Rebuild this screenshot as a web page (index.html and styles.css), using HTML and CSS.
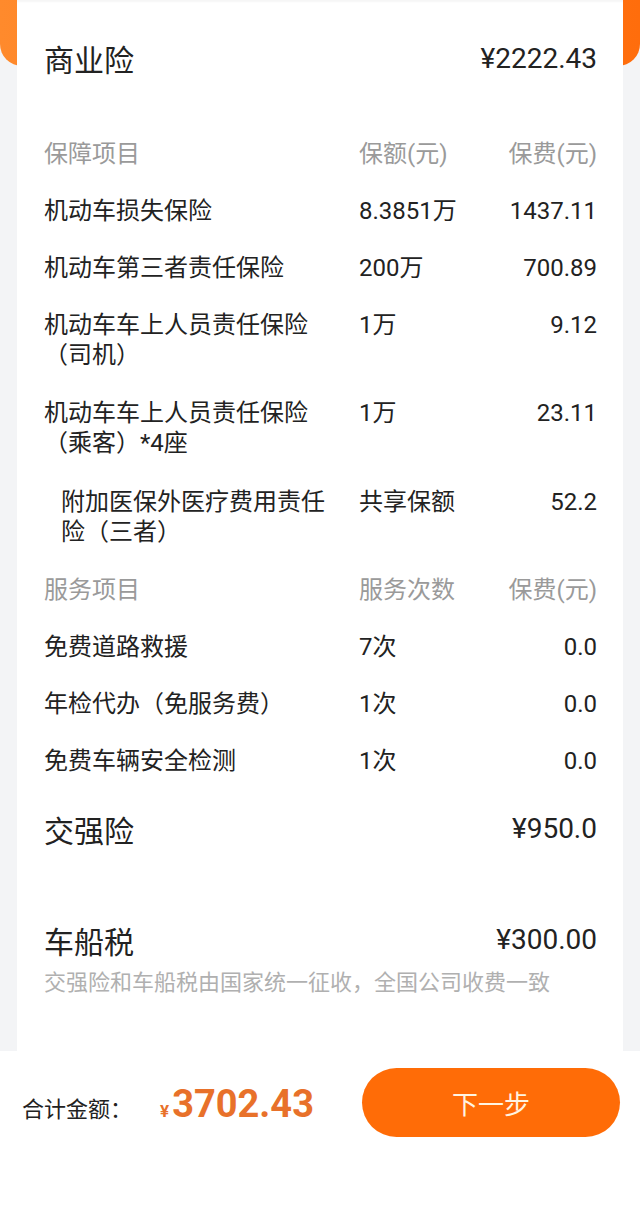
FILE: index.html
```html
<!DOCTYPE html>
<html lang="zh-CN">
<head>
	<meta charset="UTF-8">
	<meta name="viewport" content="width=device-width, initial-scale=1.0">
	<title>保费明细</title>
	<link rel="stylesheet" href="styles.css">
</head>
<body>

	<div class="top-bg"></div>

	<div class="card">
		<div class="section-title">
			<span>商业险</span>
			<span class="price">¥2222.43</span>
		</div>

		<div class="table">
			<div class="row head">
				<span>保障项目</span>
				<span>保额(元)</span>
				<span class="fee">保费(元)</span>
			</div>
			<div class="row">
				<span>机动车损失保险</span>
				<span>8.3851万</span>
				<span class="fee">1437.11</span>
			</div>
			<div class="row">
				<span>机动车第三者责任保险</span>
				<span>200万</span>
				<span class="fee">700.89</span>
			</div>
			<div class="row wrap">
				<span>机动车车上人员责任保险（司机）</span>
				<span>1万</span>
				<span class="fee">9.12</span>
			</div>
			<div class="row wrap">
				<span>机动车车上人员责任保险（乘客）*4座</span>
				<span>1万</span>
				<span class="fee">23.11</span>
			</div>
			<div class="row wrap sub">
				<span>附加医保外医疗费用责任险（三者）</span>
				<span>共享保额</span>
				<span class="fee">52.2</span>
			</div>

			<div class="row head">
				<span>服务项目</span>
				<span>服务次数</span>
				<span class="fee">保费(元)</span>
			</div>
			<div class="row">
				<span>免费道路救援</span>
				<span>7次</span>
				<span class="fee">0.0</span>
			</div>
			<div class="row">
				<span>年检代办（免服务费）</span>
				<span>1次</span>
				<span class="fee">0.0</span>
			</div>
			<div class="row">
				<span>免费车辆安全检测</span>
				<span>1次</span>
				<span class="fee">0.0</span>
			</div>
		</div>

		<div class="section-title jq">
			<span>交强险</span>
			<span class="price">¥950.0</span>
		</div>

		<div class="section-title tax">
			<span>车船税</span>
			<span class="price">¥300.00</span>
		</div>
		<p class="note">交强险和车船税由国家统一征收，全国公司收费一致</p>
	</div>

	<div class="bottom-bar">
		<div class="total">
			<span class="total-label">合计金额：</span>
			<span class="total-yen">¥</span>
			<span class="total-num">3702.43</span>
		</div>
		<button class="next-btn">下一步</button>
	</div>

</body>
</html>
```

FILE: styles.css
```css
html, body {
	margin: 0;
	padding: 0;
	width: 640px;
	font-family: Roboto, "Noto Sans CJK SC", sans-serif;
	color: #222;
	background-color: #f3f4f6;
}

.top-bg {
	height: 66px;
	background: linear-gradient(90deg, #ff8a2c, #ff6d0c);
	border-radius: 0 0 22px 22px;
}

.card {
	position: relative;
	margin: -66px 17px 0 17px;
	padding: 38px 26px 53px 27px;
	background: white;
	box-shadow: inset 0 3px 2px -1px rgba(0, 0, 0, 0.04);
}

.section-title {
	display: flex;
	justify-content: space-between;
	align-items: center;
	height: 40px;
	font-size: 30px;
}

.section-title .price {
	font-size: 28px;
}

.table {
	margin-top: 47px;
	font-size: 24px;
	line-height: 30px;
}

.row {
	display: grid;
	grid-template-columns: 286px 1fr auto;
	column-gap: 29px;
	padding: 13.5px 0;
}

.row.wrap {
	padding-bottom: 15px;
}

.row.head {
	color: #9a9a9a;
}

.row.sub span:first-child {
	padding-left: 17px;
}

.fee {
	text-align: right;
}

.jq {
	margin-top: 19px;
}

.tax {
	margin-top: 71px;
}

.note {
	margin: 8px 0 0 0;
	font-size: 22px;
	line-height: 30px;
	color: #b0b0b0;
}

.bottom-bar {
	display: flex;
	justify-content: space-between;
	align-items: flex-start;
	height: 156px;
	padding: 17px 20px 0 22px;
	box-sizing: border-box;
	background: white;
}

.total {
	display: flex;
	align-items: baseline;
	height: 69px;
	padding-top: 14px;
	box-sizing: border-box;
}

.total-label {
	font-size: 22px;
	color: #222;
}

.total-yen {
	margin-left: 28px;
	font-size: 17px;
	font-weight: bold;
	color: #e8712a;
}

.total-num {
	margin-left: 3px;
	font-size: 38px;
	font-weight: bold;
	color: #e8712a;
}

.next-btn {
	width: 258px;
	height: 69px;
	border: none;
	border-radius: 35px;
	background: #ff6c07;
	color: #fff4e2;
	font-family: "Noto Sans CJK SC", sans-serif;
	font-size: 26px;
	cursor: pointer;
}
```
